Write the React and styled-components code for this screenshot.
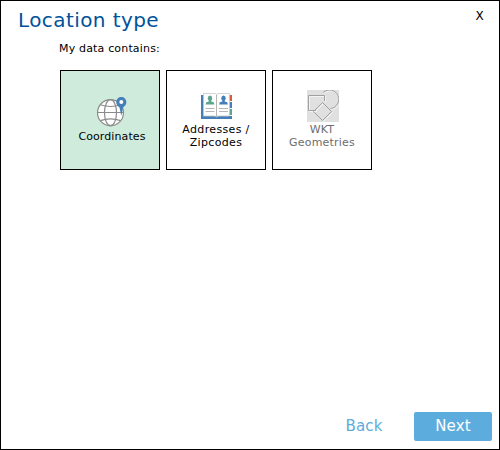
import React from "react";
import styled, { createGlobalStyle } from "styled-components";

const GlobalStyle = createGlobalStyle`
  * { box-sizing: border-box; }
  body { margin: 0; background: #fff; }
  button { font: inherit; padding: 0; cursor: pointer; }
`;

const Dialog = styled.main`
  display: flex;
  flex-direction: column;
  width: 500px;
  height: 450px;
  border: 1px solid #000;
  background: #fff;
  color: #000;
  font-family: Verdana, "DejaVu Sans", sans-serif;
  font-size: 11px;
`;

const Header = styled.header`
  display: flex;
  justify-content: space-between;
  height: 38px;
  padding: 7px 15px 0 17px;
`;

const Title = styled.h1`
  margin: 0;
  color: #00529b;
  font-size: 20px;
  font-weight: 400;
  line-height: 24px;
  letter-spacing: 0.42px;
`;

const CloseButton = styled.button`
  width: 9px;
  height: 16px;
  border: 0;
  background: none;
  color: #000;
  font-size: 12px;
  line-height: 16px;
`;

const Content = styled.section`
  flex: 1;
  padding: 2px 59px 0;
`;

const Prompt = styled.p`
  height: 16px;
  margin: 0 0 13px -1px;
  line-height: 16px;
  letter-spacing: 0.17px;
`;

const Options = styled.div`
  display: flex;
  gap: 6px;
`;

const OptionCard = styled.button`
  display: flex;
  flex-direction: column;
  align-items: center;
  width: 100px;
  height: 100px;
  padding-top: ${({ $top }) => $top}px;
  border: 1px solid #000;
  background: ${({ $selected }) => ($selected ? "#cfebdc" : "#fff")};
  color: ${({ $muted }) => ($muted ? "#6d6d6d" : "#000")};
  line-height: 13px;
  white-space: pre-line;
`;

const CardLabel = styled.span`
  padding-left: ${({ $shift = 0 }) => $shift}px;
  letter-spacing: ${({ $tracking = 0.2 }) => $tracking}px;
`;

const Icon = styled.svg`
  display: block;
  flex: none;
  width: 32px;
  height: 32px;
  margin: 0 0 1px 2px;
`;

const Footer = styled.footer`
  display: flex;
  justify-content: flex-end;
  gap: 11px;
  padding: 0 7px 8px;
`;

const ActionButton = styled.button`
  width: 78px;
  height: 29px;
  border: 0;
  border-radius: 2px;
  background: ${({ $primary }) => ($primary ? "#5dacde" : "transparent")};
  color: ${({ $primary }) => ($primary ? "#fff" : "#5dacde")};
  font-size: 15px;
  line-height: 27px;
  letter-spacing: 0.15px;
`;

const GlobeIcon = () => (
  <Icon viewBox="0 0 32 32" fill="none" stroke="#8b8b8b" strokeWidth="1.2">
    <circle cx="15.5" cy="15.7" r="13" fill="#fff" />
    <ellipse cx="15.5" cy="15.7" rx="6" ry="13" />
    <path d="M2.500 15.500h26M5.300 7.800q10.200 3.400 20.400 0M5.300 23.600q10.200-3.400 20.400 0" />
    <path
      d="M26.300 19 24.500 10.500C22.500 8.500 21.200 7.500 21.200 5a5.100 5.100 0 0 1 10.200 0C31.400 7.500 30.100 8.500 28.100 10.500z"
      fill="#447fb8"
      stroke="none"
    />
    <circle cx="26.300" cy="5" r="2" fill="#fff" stroke="none" />
  </Icon>
);

const Contact = ({ x, color }) => (
  <g transform={`translate(${x} 0)`} fill={color}>
    <ellipse cx="4.500" cy="8.200" rx="2.200" ry="2.600" />
    <path d="M3.300 10h2.400v1.500l2.500.8.700 2.200H.1L.8 12.300l2.500-.8z" />
    <path d="M0 18.500h9M0 21.500h9" stroke="#b5b5b5" />
  </g>
);

const BookIcon = () => (
  <Icon viewBox="0 0 32 32">
    <path fill="#447fb8" d="M0 5h31v24H0z" />
    <path fill="#fff" d="M28 5h4v21h-4z" />
    <path fill="#d85b3b" d="M28 5h3v6h-3z" />
    <path fill="#447fb8" d="M28 12h3v6h-3z" />
    <path fill="#5ba58e" d="M28 19h3v6h-3z" />
    <path
      d="M2.500 3.500H13q2 0 2.500 1 .5-1 2.500-1h10.500V26H18q-2 0-2.500 1-.5-1-2.500-1H2.500z"
      fill="#fff"
      stroke="#c8c8c8"
      strokeWidth=".8"
    />
    <path d="M15.500 4.500V27" stroke="#b5b5b5" />
    <Contact x={4.500} color="#5ba58e" />
    <Contact x={18} color="#447fb8" />
  </Icon>
);

const Figures = () => (
  <>
    <path d="M9 20.500H1.500v-15h16V11M16.300 2.300A9.300 9.300 0 1 1 23.500 18.500" />
    <path d="m15.500 12.500 9 9-9 9-9-9z" />
  </>
);

const GeometryIcon = () => (
  <Icon viewBox="0 0 32 32" fill="none">
    <path fill="#e0e0e0" d="M0 0h32v32H0z" />
    <g stroke="#f4f4f4" transform="translate(1 1)">
      <Figures />
    </g>
    <g stroke="#a0a0a0">
      <Figures />
    </g>
  </Icon>
);

export default function App() {
  return (
    <>
      <GlobalStyle />
      <Dialog>
        <Header>
          <Title>Location type</Title>
          <CloseButton>X</CloseButton>
        </Header>
        <Content>
          <Prompt>My data contains:</Prompt>
          <Options>
            <OptionCard $selected $top={26}>
              <GlobeIcon />
              <CardLabel $shift={4} $tracking={0.1}>Coordinates</CardLabel>
            </OptionCard>
            <OptionCard $top={19}>
              <BookIcon />
              <CardLabel $tracking={0.35}>{"Addresses /\nZipcodes"}</CardLabel>
            </OptionCard>
            <OptionCard $muted $top={19}>
              <GeometryIcon />
              <CardLabel>{"WKT\nGeometries"}</CardLabel>
            </OptionCard>
          </Options>
        </Content>
        <Footer>
          <ActionButton>Back</ActionButton>
          <ActionButton $primary>Next</ActionButton>
        </Footer>
      </Dialog>
    </>
  );
}
